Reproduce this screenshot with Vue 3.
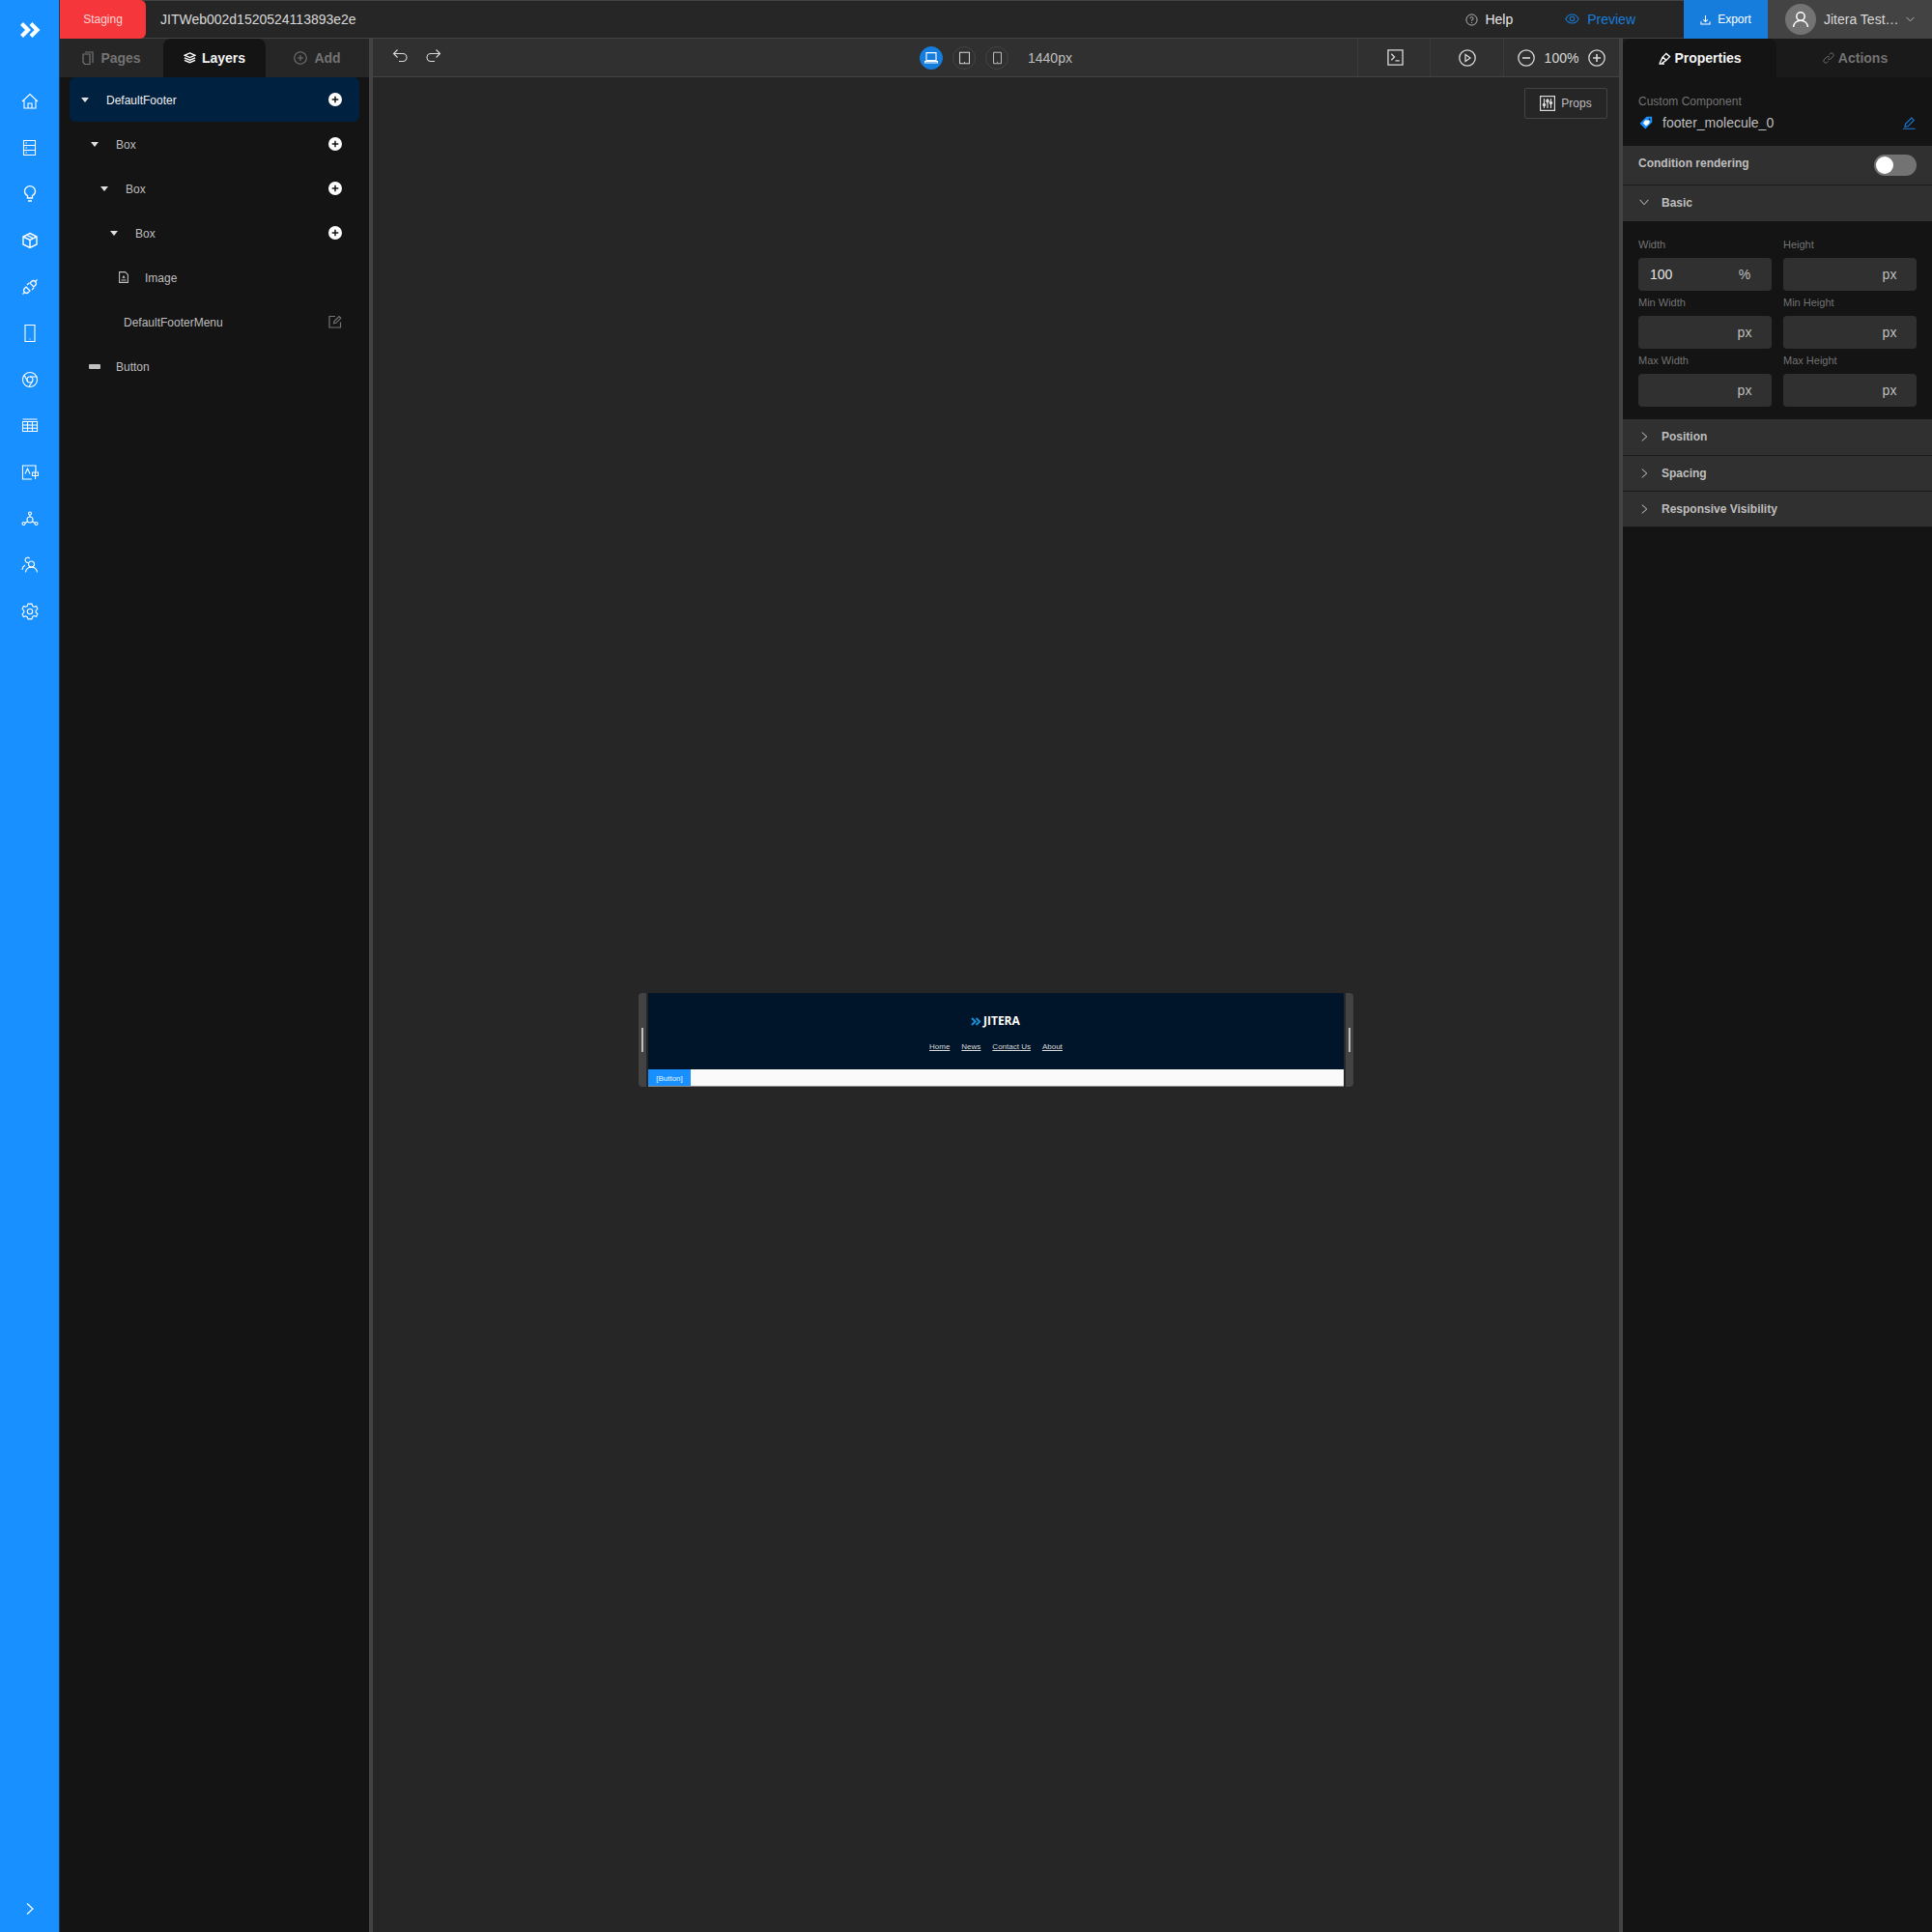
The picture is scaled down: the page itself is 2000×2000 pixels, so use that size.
<script setup>
const sideIcons = ['home','db','bulb','cube','plug','phone','chrome','table','lang','nodes','users','gear']
const layers = [
  { name: 'DefaultFooter', depth: 0, kind: 'caret', action: 'add', selected: true },
  { name: 'Box', depth: 1, kind: 'caret', action: 'add' },
  { name: 'Box', depth: 2, kind: 'caret', action: 'add' },
  { name: 'Box', depth: 3, kind: 'caret', action: 'add' },
  { name: 'Image', depth: 4, kind: 'file' },
  { name: 'DefaultFooterMenu', depth: 4, kind: 'none', action: 'edit' },
  { name: 'Button', depth: 1, kind: 'btn' },
]
const fields = [
  { label: 'Width', value: '100', unit: '%' },
  { label: 'Height', value: '', unit: 'px' },
  { label: 'Min Width', value: '', unit: 'px' },
  { label: 'Min Height', value: '', unit: 'px' },
  { label: 'Max Width', value: '', unit: 'px' },
  { label: 'Max Height', value: '', unit: 'px' },
]
const links = ['Home', 'News', 'Contact Us', 'About']
const collapsed = ['Position', 'Spacing', 'Responsive Visibility']
</script>

<template>
  <div class="app">
    <aside class="rail">
      <svg class="logo" viewBox="0 0 22 18" width="22" height="18"><path d="M2.5 2.5 9 9l-6.500 6.500M12 2.500 18.500 9 12 15.500" fill="none" stroke="#fff" stroke-width="4.200"/></svg>
      <nav class="rail-nav">
        <span v-for="i in sideIcons" :key="i" class="rail-item">
          <svg :viewBox="i==='nodes' ? '0 -1 18 18' : '0 0 18 18'" width="18" height="18" fill="none" stroke="#fff" stroke-width="1.100">
            <template v-if="i==='home'"><path d="M1 9 9 1.500 17 9M3 7.500V16h12V7.500M7 16v-5h4v5"/></template>
            <template v-else-if="i==='db'"><path d="M2.500 1.500h12v15h-12zM2.500 6.500h12M2.500 11.500h12M4.500 4h1.500M4.500 9h1.500M4.500 14h1.500"/></template>
            <template v-else-if="i==='bulb'"><path d="M6.500 13v-2.500C4.500 9.500 3.500 8 3.500 6.200a5.500 5.500 0 0 1 11 0c0 1.800-1 3.300-3 4.300V13zM7 16h4" stroke-width="1.300"/></template>
            <template v-else-if="i==='cube'"><path d="M9 1.500 16 5v8l-7 3.500L2 13V5zM2 5l7 3.500L16 5M9 8.500v8M5.500 3.200 12.500 6.800" stroke-width="1.400"/></template>
            <template v-else-if="i==='plug'"><path d="M1.500 16.500 4 14M16.500 1.500 14 4M5 9l4 4-1.500 1.500a2.800 2.800 0 0 1-4-4zM13 9 9 5l1.500-1.500a2.800 2.800 0 0 1 4 4zM6 7l2-2M11 12l2-2" stroke-width="1.200"/></template>
            <template v-else-if="i==='phone'"><path d="M4 .5h10v17H4zM8.500 15h1"/></template>
            <template v-else-if="i==='chrome'"><circle cx="9" cy="9" r="7.500"/><circle cx="9" cy="9" r="3"/><path d="M9 6h7M6.400 10.500 3 4M11.600 10.500 8 16.500"/></template>
            <template v-else-if="i==='table'"><path d="M1.500 2h15M1.500 4.500h15V14.500h-15zM1.500 8h15M1.500 11.200h15M6.500 5v9.500M11.500 5v9.500"/></template>
            <template v-else-if="i==='lang'"><path d="M11 16H1.500V2H15v6M4 10.500 6.500 5 9 10.500M11.500 9h6v3.500h-6zM14.500 7.500V16"/></template>
            <template v-else-if="i==='nodes'"><circle cx="9" cy="9" r="3"/><circle cx="9" cy="2.500" r="1.500"/><circle cx="2.500" cy="13" r="1.500"/><circle cx="15.500" cy="13" r="1.500"/><path d="M9 4v2M4 12.500l2.500-1.800M14 12.500l-2.500-1.800"/></template>
            <template v-else-if="i==='users'"><circle cx="10.500" cy="8" r="3"/><path d="M4.500 16.500c.3-3.500 3-5.300 6-5.300s5.700 1.800 6 5.300M7.500 6.500A3 3 0 0 1 4.500 2c1-1 3-1.200 4.200 0M1 14c.2-2.300 1.300-4 3-5"/></template>
            <template v-else><path d="m9 1 2 .1.700 2.200 1.700.9 2.200-.7 1.300 2.800-1.700 1.600v2l1.700 1.600-1.300 2.800-2.200-.7-1.700.9L11 16.900H7l-.7-2.200-1.700-.9-2.200.7L1.100 11.700l1.700-1.600v-2L1.100 6.300l1.300-2.800 2.200.7 1.700-.9L7 1.100z"/><circle cx="9" cy="9" r="2.700"/></template>
          </svg>
        </span>
      </nav>
      <svg class="rail-expand" viewBox="0 0 10 14" width="10" height="14"><path d="m2 1.500 6 5.500-6 5.500" fill="none" stroke="#fff" stroke-width="1.200"/></svg>
    </aside>

    <div class="main">
      <header class="topbar">
        <div class="staging">Staging</div>
        <div class="title">JITWeb002d1520524113893e2e</div>
        <div class="help">
          <svg viewBox="0 0 14 14" width="13" height="13" fill="none" stroke="#bfbfbf"><circle cx="7" cy="7" r="6"/><path d="M5.300 5.500A1.700 1.700 0 1 1 7 7.300V8.300M7 9.700v1"/></svg>
          <span>Help</span>
        </div>
        <div class="preview">
          <svg class="eye" viewBox="0 0 16 12" width="15" height="11" fill="none" stroke="#177ddc" stroke-width="1.100"><path d="M.7 6C2.500 2.500 5 1 8 1s5.500 1.500 7.300 5C13.500 9.500 11 11 8 11S2.500 9.500.7 6z"/><circle cx="8" cy="6" r="2.500"/></svg>
          <span>Preview</span>
        </div>
        <div class="export">
          <svg viewBox="0 0 12 12" width="11" height="11" fill="none" stroke="#fff" stroke-width="1.100"><path d="M6 1v7M3.500 5.800 6 8.300l2.500-2.500M1 8v3h10V8"/></svg>
          <span>Export</span>
        </div>
        <div class="user">
          <span class="avatar">
            <svg viewBox="0 0 18 18" width="18" height="18" fill="none" stroke="#fff" stroke-width="1.500"><circle cx="9" cy="6" r="4.200"/><path d="M1.500 17c.4-4.200 3.500-6.800 7.500-6.800s7.100 2.600 7.500 6.800"/></svg>
          </span>
          <span class="user-name">Jitera Test…</span>
          <svg viewBox="0 0 10 6" width="9" height="6" fill="none" stroke="#bfbfbf"><path d="m.7.700 4.300 4.300L9.300.700"/></svg>
        </div>
      </header>

      <div class="workspace">
        <section class="left">
          <div class="tabs">
            <div class="tab pages">
              <svg viewBox="0 0 12 14" width="12" height="14" fill="none" stroke="#737373" stroke-width="1.200"><path d="M3 1h8v11M1 3h7v10.500H3l-2-2z"/></svg>
              <span>Pages</span>
            </div>
            <div class="tab active-l">
              <svg viewBox="0 0 14 14" width="13" height="13" fill="none" stroke="#fff" stroke-width="1.500"><path d="M7 1 13 3.500 7 6 1 3.500zM1 6.300 7 8.800l6-2.500M1 9 7 11.500 13 9"/></svg>
              <span>Layers</span>
            </div>
            <div class="tab add">
              <svg viewBox="0 0 14 14" width="14" height="14" fill="none" stroke="#737373" stroke-width="1.100"><circle cx="7" cy="7" r="6.300"/><path d="M7 4v6M4 7h6"/></svg>
              <span>Add</span>
            </div>
          </div>
          <div class="tree">
            <div v-for="(l, n) in layers" :key="n" class="node" :class="['d' + l.depth, l.kind, { selected: l.selected }]">
              <span class="lead">
                <svg v-if="l.kind==='caret'" viewBox="0 0 8 5" width="8" height="5"><path d="M0 0h8L4 5z" fill="#e0e0e0"/></svg>
                <svg v-else-if="l.kind==='file'" viewBox="0 0 10 12" width="10" height="12" fill="none" stroke="#bfbfbf" stroke-width="1.100"><path d="M.6.600h6l2.800 2.800v8H.6zM2.500 9h5M4 7l1-2 1.200 2"/></svg>
                <span v-else-if="l.kind==='btn'" class="btn-ico"></span>
              </span>
              <span class="node-name">{{ l.name }}</span>
              <span v-if="l.action==='add'" class="node-add">
                <svg viewBox="0 0 14 14" width="14" height="14"><circle cx="7" cy="7" r="7" fill="#fff"/><path d="M7 3.700v6.600M3.700 7h6.600" stroke="#141414" stroke-width="1.500"/></svg>
              </span>
              <span v-if="l.action==='edit'" class="node-add">
                <svg viewBox="0 0 14 14" width="14" height="14" fill="none" stroke="#737373" stroke-width="1.200"><path d="M12.500 7.500v5.500H1V1.500h6M5.500 8.800 6 6.500 11 1.500 12.800 3.300 7.800 8.300z"/></svg>
              </span>
            </div>
          </div>
        </section>

        <section class="center">
          <div class="toolbar">
            <div class="history">
              <svg viewBox="0 0 16 16" width="16" height="16" fill="none" stroke="#d9d9d9" stroke-width="1.100"><path d="M5.500 1.500 1.500 5.500l4 4M1.500 5.500H11a3.800 3.800 0 0 1 0 8H7"/></svg>
              <svg viewBox="0 0 16 16" width="16" height="16" fill="none" stroke="#d9d9d9" stroke-width="1.100"><path d="m10.500 1.500 4 4-4 4M14.500 5.500H5a3.800 3.800 0 0 0 0 8h4"/></svg>
            </div>
            <div class="devices">
              <span class="dev on">
                <svg viewBox="0 0 14 12" width="14" height="12" fill="none" stroke="#fff" stroke-width="1.100"><path d="M2 .6h10v8H2zM.5 9.500h13V11H.5z"/></svg>
              </span>
              <span class="dev">
                <svg viewBox="0 0 12 14" width="11" height="14" fill="none" stroke="#d9d9d9" stroke-width="1.100"><path d="M.6.600h10.800v12.800H.6zM5.500 11.800h1"/></svg>
              </span>
              <span class="dev">
                <svg viewBox="0 0 10 14" width="9" height="14" fill="none" stroke="#bfbfbf" stroke-width="1.100"><path d="M.6.600h8.800v12.800H.6zM4.500 11.800h1"/></svg>
              </span>
              <span class="px">1440px</span>
            </div>
            <div class="tools">
              <span class="tool terminal">
                <svg viewBox="0 0 18 18" width="17" height="17" fill="none" stroke="#d9d9d9" stroke-width="1.400"><path d="M1 1h16v16H1zM4.500 5l3.500 3.500L4.500 12M9 12.500h4.500"/></svg>
              </span>
              <span class="tool play">
                <svg viewBox="0 0 18 18" width="18" height="18" fill="none" stroke="#d9d9d9" stroke-width="1.300"><circle cx="9" cy="9" r="8.200"/><path d="M7 5.500 12 9l-5 3.500z"/></svg>
              </span>
              <span class="tool zoom">
                <svg viewBox="0 0 18 18" width="18" height="18" fill="none" stroke="#d9d9d9" stroke-width="1.300"><circle cx="9" cy="9" r="8.200"/><path d="M5 9h8" stroke-width="1.600"/></svg>
                <span class="zoom-val">100%</span>
                <svg viewBox="0 0 18 18" width="18" height="18" fill="none" stroke="#d9d9d9" stroke-width="1.300"><circle cx="9" cy="9" r="8.200"/><path d="M5 9h8M9 5v8" stroke-width="1.600"/></svg>
              </span>
            </div>
          </div>
          <div class="stage">
            <div class="props">
              <svg viewBox="0 0 16 16" width="16" height="16" fill="none" stroke="#d9d9d9" stroke-width="1.200"><path d="M.6.600h14.800v14.800H.6zM4.500 3v10M8 3v10M11.500 3v10"/><circle cx="4.500" cy="9.500" r="1.200" fill="#d9d9d9"/><circle cx="8" cy="5.500" r="1.200" fill="#d9d9d9"/><circle cx="11.500" cy="7.500" r="1.200" fill="#d9d9d9"/></svg>
              <span>Props</span>
            </div>
            <div class="frame">
              <div class="handle left-h"><i></i></div>
              <div class="page">
                <div class="foot">
                  <div class="brand">
                    <svg viewBox="0 0 12 10" width="11" height="9"><path d="M1 1 5 5 1 9M6 1l4 4-4 4" fill="none" stroke="#1a8ad0" stroke-width="2.400"/></svg>
                    <span>JITERA</span>
                  </div>
                  <div class="links"><a v-for="l in links" :key="l">{{ l }}</a></div>
                </div>
                <div class="strip"><span class="fbtn">[Button]</span></div>
              </div>
              <div class="handle right-h"><i></i></div>
            </div>
          </div>
        </section>

        <section class="right">
          <div class="tabs r">
            <div class="tab active-r">
              <svg viewBox="0 0 14 14" width="14" height="13" fill="none" stroke="#fff" stroke-width="1.400"><path d="M1 13h6M5 5.500 9 1.500l4 3.500-4 4zM5 5.500 1.500 13M9 9 3.500 13"/></svg>
              <span>Properties</span>
            </div>
            <div class="tab actions">
              <svg viewBox="0 0 14 14" width="12" height="12" fill="none" stroke="#737373" stroke-width="1.100"><path d="M6 8a2.500 2.500 0 0 0 3.500 0l3-3A2.500 2.500 0 0 0 9 1.500L7.500 3M8 6a2.500 2.500 0 0 0-3.500 0l-3 3A2.500 2.500 0 0 0 5 12.500L6.500 11"/></svg>
              <span>Actions</span>
            </div>
          </div>
          <div class="custom">
            <div class="custom-label">Custom Component</div>
            <div class="custom-row">
              <svg viewBox="0 0 14 14" width="14" height="14"><path d="M7.500.8h5.700v5.700l-6.900 6.900-5.700-5.700z" fill="#1890ff"/><path d="M6 4.500h4.500v3L7 10.500 4 7.500z" fill="#fff"/><circle cx="10.500" cy="3.500" r="1" fill="#141414"/></svg>
              <span class="custom-name">footer_molecule_0</span>
              <svg viewBox="0 0 14 14" width="14" height="14" fill="none" stroke="#177ddc" stroke-width="1.100"><path d="M1 13.300h12.500M3 11.300l.5-3L9.800 2l2.500 2.500-6.300 6.300z"/></svg>
            </div>
          </div>
          <div class="cond">
            <span>Condition rendering</span>
            <span class="switch"><i></i></span>
          </div>
          <div class="section first">
            <svg viewBox="0 0 12 8" width="10" height="7" fill="none" stroke="#d9d9d9" stroke-width="1.100"><path d="m.7.700 5.300 6 5.300-6"/></svg>
            <span>Basic</span>
          </div>
          <div class="grid">
            <div v-for="f in fields" :key="f.label" class="field">
              <label>{{ f.label }}</label>
              <div class="input">
                <span class="val">{{ f.value }}</span>
                <span class="unit">{{ f.unit }}</span>
              </div>
            </div>
          </div>
          <div v-for="(c, n) in collapsed" :key="c" class="section" :class="{ tall: n === 0 }">
            <svg viewBox="0 0 8 12" width="7" height="10" fill="none" stroke="#d9d9d9" stroke-width="1.100"><path d="m.7.700 6 5.300-6 5.300"/></svg>
            <span>{{ c }}</span>
          </div>
        </section>
      </div>
    </div>
  </div>
</template>

<style>
html, body { margin: 0; background: #262626; }
</style>

<style scoped>
.app { width: 2000px; height: 2000px; display: flex; overflow: hidden; font-family: "Liberation Sans", Arial, sans-serif; font-size: 14px; color: #d9d9d9; background: #262626; }
.rail { width: 61px; flex: none; background: #1890ff; border-right: 1px solid #1f3a55; display: flex; flex-direction: column; align-items: center; }
.logo { margin-top: 22px; flex: none; }
.rail-nav { margin-top: 41px; display: flex; flex-direction: column; }
.rail-item { height: 48px; display: flex; align-items: center; justify-content: center; }
.rail-expand { margin-top: auto; margin-bottom: 17px; }
.main { flex: 1; min-width: 0; display: flex; flex-direction: column; }
.topbar { height: 40px; box-sizing: border-box; background: #262626; border-top: 1px solid #434343; border-bottom: 1px solid #434343; display: flex; align-items: center; position: relative; }
.staging { width: 89px; height: 40px; margin-top: -1px; margin-bottom: -1px; background: #f5363b; border-radius: 0 6px 6px 0; color: #ffd6d6; font-size: 12px; display: flex; align-items: center; justify-content: center; flex: none; }
.title { margin-left: 15px; color: #d9d9d9; }
.help { margin-left: auto; display: flex; align-items: center; gap: 7px; color: #e6e6e6; }
.preview { margin-left: 54px; display: flex; align-items: center; gap: 8px; color: #177ddc; }
.eye { margin-top: -2px; }
.export { margin-left: 50px; width: 87px; height: 40px; margin-top: -1px; margin-bottom: -1px; background: #177ddc; color: #fff; font-size: 12px; display: flex; align-items: center; justify-content: center; gap: 7px; flex: none; }
.user { width: 170px; height: 40px; margin-top: -1px; margin-bottom: -1px; background: #434343; box-sizing: border-box; padding-left: 18px; display: flex; align-items: center; flex: none; }
.avatar { width: 32px; height: 32px; border-radius: 50%; background: #737373; display: flex; align-items: center; justify-content: center; }
.user-name { margin-left: 8px; width: 85px; color: #d9d9d9; white-space: nowrap; }
.workspace { flex: 1; display: flex; min-height: 0; }
.left { width: 320px; flex: none; background: #141414; }
.tabs { height: 40px; display: flex; background: #262626; }
.tab { display: flex; align-items: center; justify-content: center; gap: 7px; font-weight: 700; color: #737373; font-size: 14px; }
.pages { width: 107px; }
.active-l { width: 106px; background: #141414; color: #f5f5f5; border-radius: 8px 8px 0 0; gap: 6px; }
.add { width: 107px; }
.tree { display: flex; flex-direction: column; }
.node { height: 46px; display: flex; align-items: center; box-sizing: border-box; font-size: 12px; color: #bfbfbf; position: relative; }
.node.selected { background: #002140; border-radius: 6px; margin: 0 10px; color: #f0f0f0; padding-left: 10px; }
.lead { width: 12px; display: flex; justify-content: center; flex: none; }
.node-name { margin-left: 16px; padding-top: 2px; }
.d1 { padding-left: 30px; }
.d2 { padding-left: 40px; }
.d3 { padding-left: 50px; }
.d4 { padding-left: 60px; }
.d4 .node-name { margin-left: 16px; }
.d4.none { padding-left: 66px; }
.d4.none .lead { width: 0; }
.d4.none .node-name { margin-left: 0; }
.btn-ico { width: 12px; height: 5px; background: #bfbfbf; border-radius: 1px; display: block; flex: none; }
.node-add { position: absolute; right: 28px; top: 16px; display: flex; line-height: 0; }
.node.selected .node-add { right: 18px; top: 16px; }
.center { flex: 1; min-width: 0; border-left: 4px solid #434343; border-right: 4px solid #434343; display: flex; flex-direction: column; }
.toolbar { height: 40px; box-sizing: border-box; background: #303030; border-bottom: 1px solid #434343; display: flex; align-items: center; padding-left: 20px; position: relative; }
.history { display: flex; gap: 19px; margin-top: -4px; }
.devices { position: absolute; left: 566px; top: 4px; display: flex; align-items: center; gap: 10px; height: 32px; }
.dev { width: 24px; height: 24px; border-radius: 50%; border: 1px solid #434343; box-sizing: border-box; display: flex; align-items: center; justify-content: center; }
.dev.on { background: #177ddc; border-color: #177ddc; }
.px { margin-left: 10px; color: #bfbfbf; }
.tools { margin-left: auto; display: flex; height: 100%; }
.tool { display: flex; align-items: center; justify-content: center; border-left: 1px solid #3a3a3a; }
.terminal { width: 75px; padding-left: 2px; box-sizing: border-box; }
.play { width: 75px; }
.zoom { width: 119px; gap: 10px; }
.zoom-val { color: #d9d9d9; }
.stage { flex: 1; position: relative; display: flex; justify-content: center; padding-top: 948px; }
.props { position: absolute; top: 11px; right: 12px; width: 86px; height: 32px; box-sizing: border-box; border: 1px solid #434343; border-radius: 2px; display: flex; align-items: center; justify-content: center; gap: 6px; font-size: 12px; color: #bfbfbf; }
.frame { display: flex; height: 97px; }
.handle { width: 8px; background: #434343; display: flex; align-items: center; justify-content: center; }
.left-h { border-radius: 4px 0 0 4px; margin-right: 2px; }
.right-h { border-radius: 0 4px 4px 0; margin-left: 2px; }
.handle i { width: 2px; height: 25px; background: #bfbfbf; display: block; }
.page { width: 720px; display: flex; flex-direction: column; border-bottom: 1px solid #8c8c8c; box-sizing: border-box; }
.foot { height: 79px; background: #001529; position: relative; }
.brand { position: absolute; top: 22px; left: 334px; display: flex; align-items: center; gap: 2px; color: #fff; font-family: "Open Sans", sans-serif; font-weight: 700; font-size: 12px; line-height: 14px; }
.links { position: absolute; top: 51px; left: 291px; display: flex; gap: 12px; font-size: 8px; line-height: 10px; color: #d9d9d9; }
.links a { text-decoration: underline; }
.strip { flex: 1; background: #fafafa; display: flex; }
.fbtn { width: 44px; background: #1890ff; color: #e6f4ff; font-size: 8px; display: flex; align-items: center; justify-content: center; padding-top: 1px; box-sizing: border-box; }
.right { width: 320px; flex: none; background: #141414; }
.tabs.r { background: #1a1a1a; }
.active-r { width: 159px; background: #141414; color: #f5f5f5; border-radius: 8px 8px 0 0; gap: 3px; }
.actions { flex: 1; gap: 4px; padding-left: 2px; }
.custom { height: 71px; box-sizing: border-box; padding: 17px 16px 0; }
.custom-label { font-size: 12px; line-height: 16px; color: #737373; }
.custom-row { display: flex; align-items: center; margin-top: 3px; height: 22px; padding-right: 1px; }
.custom-row svg:first-child { margin-left: 1px; }
.custom-name { margin-left: 10px; flex: 1; color: #bfbfbf; }
.cond { height: 41px; box-sizing: border-box; background: #303030; border-bottom: 1px solid #1a1a1a; display: flex; align-items: center; justify-content: space-between; padding: 0 16px; font-size: 12px; font-weight: 700; color: #bfbfbf; }
.cond span:first-child { margin-top: -5px; }
.switch { width: 44px; height: 22px; border-radius: 11px; background: #737373; position: relative; display: block; }
.switch i { position: absolute; left: 2px; top: 2px; width: 18px; height: 18px; background: #fff; border-radius: 50%; display: block; }
.section { height: 37px; box-sizing: border-box; background: #303030; border-bottom: 1px solid #1a1a1a; display: flex; align-items: center; padding-left: 19px; gap: 14px; font-size: 12px; font-weight: 700; color: #bfbfbf; }
.section.tall { height: 38px; padding-bottom: 1px; }
.section.first { border: 0; padding-left: 17px; gap: 13px; padding-bottom: 2px; }
.grid { display: grid; grid-template-columns: 138px 138px; column-gap: 12px; row-gap: 4px; padding: 16px 16px 13px; }
.field label { display: block; font-size: 11px; line-height: 16px; color: #737373; margin-bottom: 6px; }
.input { height: 34px; background: #303030; border-radius: 4px; display: flex; align-items: center; justify-content: space-between; padding: 0 20px 0 12px; color: #bfbfbf; }
.unit { width: 16px; text-align: center; }
.val { color: #e6e6e6; }
</style>
